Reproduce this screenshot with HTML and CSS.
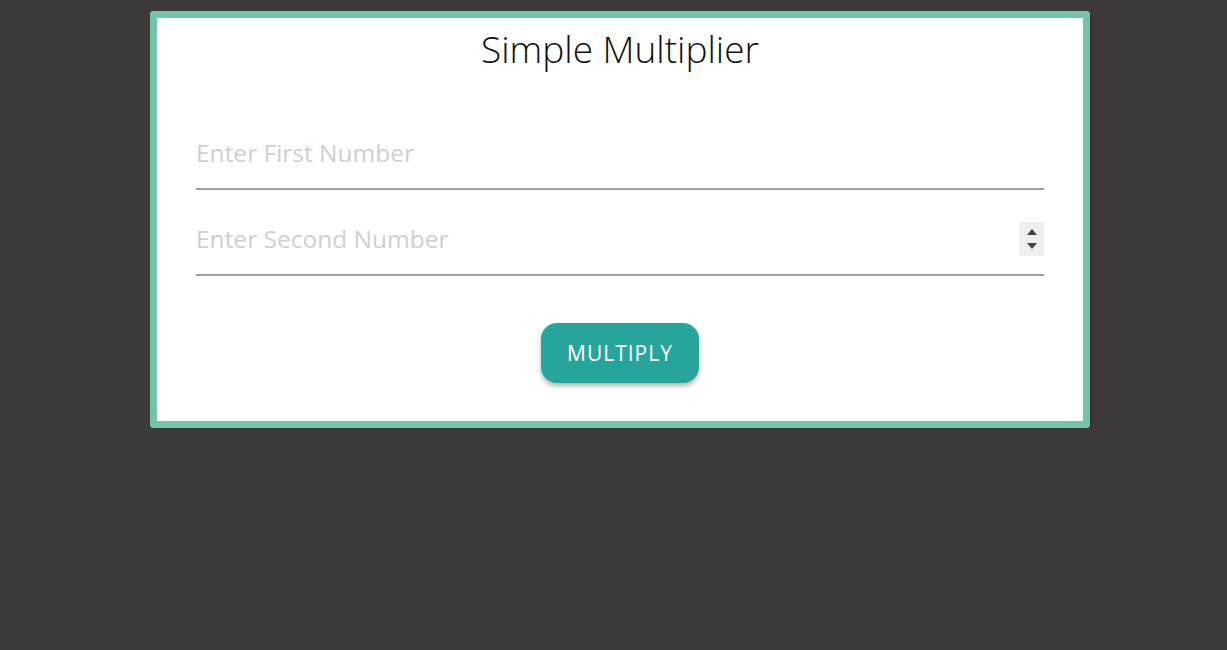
FILE: index.html
```html
<!DOCTYPE html>
<html>
<head>
<meta charset="utf-8">
<link rel="stylesheet" href="styles.css">
</head>
<body>
<div class="page">
  <div class="card">
    <h1 class="title">Simple Multiplier</h1>
    <div class="field">
      <input class="num" type="text" placeholder="Enter First Number">
    </div>
    <div class="field">
      <input class="num" type="text" placeholder="Enter Second Number">
      <div class="spinner">
        <span class="tri up"></span>
        <span class="tri down"></span>
      </div>
    </div>
    <div class="actions">
      <button class="btn">MULTIPLY</button>
    </div>
  </div>
</div>
</body>
</html>
```
FILE: styles.css
```css
html, body {
  margin: 0;
  padding: 0;
  background: #3e3a39;
  font-family: "Open Sans", "Noto Sans", sans-serif;
}
.page {
  display: flex;
  justify-content: center;
  padding: 11px 0 0 13px;
}
.card {
  width: 848px;
  background: #fff;
  border: 7px solid #70c6a7;
  border-radius: 3px;
  box-shadow: 1px 2px 3px rgba(0,0,0,0.35);
  padding: 0 39px 38px;
  box-sizing: content-box;
}
.title {
  margin: 8px 0 0;
  text-align: center;
  font-weight: 300;
  font-size: 37px;
  line-height: 46px;
  color: #111;
}
.field {
  position: relative;
  margin-top: 50px;
}
.field + .field {
  margin-top: 18px;
}
.num {
  display: block;
  width: 100%;
  box-sizing: border-box;
  border: none;
  border-bottom: 2px solid #9e9e9e;
  outline: none;
  padding: 0 0 5px;
  height: 68px;
  font-family: inherit;
  font-size: 24.5px;
  color: #222;
  background: transparent;
}
.num::placeholder {
  color: #cfcfcf;
}
.spinner {
  position: absolute;
  right: 0;
  top: 14px;
  width: 25px;
  height: 34px;
  background: #efefef;
  display: flex;
  flex-direction: column;
  align-items: center;
  justify-content: center;
  gap: 8px;
}
.tri {
  width: 0;
  height: 0;
  border-left: 5px solid transparent;
  border-right: 5px solid transparent;
}
.tri.up { border-bottom: 6px solid #444; }
.tri.down { border-top: 6px solid #444; }
.actions {
  display: flex;
  justify-content: center;
  margin-top: 47px;
}
.btn {
  width: 158px;
  height: 60px;
  border: none;
  border-radius: 16px;
  background: #26a69a;
  color: #fff;
  font-family: inherit;
  font-size: 21px;
  letter-spacing: 1px;
  box-shadow: 0 3px 5px rgba(0,0,0,0.3);
  cursor: pointer;
}
```
